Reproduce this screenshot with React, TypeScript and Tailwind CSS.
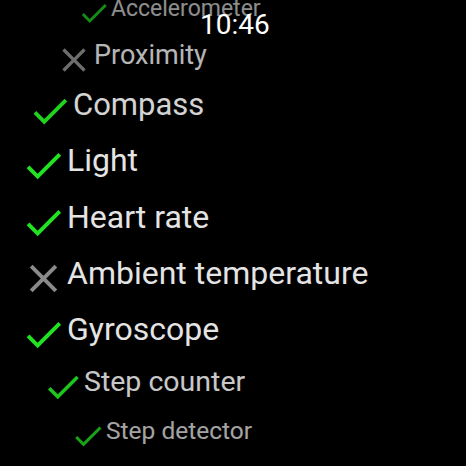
import React from "react";

const CHECK = "M9 16.17L4.83 12l-1.42 1.41L9 19 21 7l-1.41-1.41z";
const CLOSE =
  "M19 6.41L17.59 5 12 10.59 6.41 5 5 6.41 10.59 12 5 17.59 6.41 19 12 13.41 17.59 19 19 17.59 13.41 12z";

function Icon({ ok, cls }: { ok: boolean; cls: string }) {
  return (
    <svg viewBox="0 0 24 24" className={cls + " shrink-0"} fill={ok ? "#22e322" : "#8a8a8a"}>
      <path d={ok ? CHECK : CLOSE} />
    </svg>
  );
}

export default function App() {
  return (
    <div
      className="relative w-[466px] h-[466px] overflow-hidden bg-black"
      style={{ fontFamily: "Roboto, 'Noto Sans', sans-serif" }}
    >
      <div className="flex flex-col mt-[-4px]">
        <div className="flex h-[44px] pl-[77px] opacity-[0.62]">
          <Icon ok cls="w-[34px] h-[34px]" />
          <span className="mt-[1px] text-[23px] leading-none text-[#e4e4e4] whitespace-nowrap">Accelerometer</span>
        </div>
        <div className="flex h-[48px] pl-[54px] opacity-[0.8]">
          <Icon ok={false} cls="w-[40px] h-[40px]" />
          <span className="mt-[2px] text-[27px] leading-none text-[#e4e4e4] whitespace-nowrap">Proximity</span>
        </div>
        <div className="flex h-[54px] pl-[27px] opacity-[0.93]">
          <Icon ok cls="w-[46px] h-[46px]" />
          <span className="mt-[1px] text-[31px] leading-none text-[#e4e4e4] whitespace-nowrap">Compass</span>
        </div>
        <div className="flex h-[57px] pl-[20px]">
          <Icon ok cls="w-[47px] h-[47px]" />
          <span className="mt-[2px] text-[32px] leading-none text-[#e4e4e4] whitespace-nowrap">Light</span>
        </div>
        <div className="flex h-[56px] pl-[20px]">
          <Icon ok cls="w-[47px] h-[47px]" />
          <span className="mt-[2px] text-[32px] leading-none text-[#e4e4e4] whitespace-nowrap">Heart rate</span>
        </div>
        <div className="flex h-[56px] pl-[20px]">
          <Icon ok={false} cls="w-[47px] h-[47px]" />
          <span className="mt-[2px] text-[32px] leading-none text-[#e4e4e4] whitespace-nowrap">Ambient temperature</span>
        </div>
        <div className="flex h-[55px] pl-[20px]">
          <Icon ok cls="w-[47px] h-[47px]" />
          <span className="mt-[2px] text-[32px] leading-none text-[#e4e4e4] whitespace-nowrap">Gyroscope</span>
        </div>
        <div className="flex h-[52px] pl-[42px] opacity-[0.88]">
          <Icon ok cls="w-[42px] h-[42px]" />
          <span className="mt-[2px] text-[28.5px] leading-none text-[#e4e4e4] whitespace-nowrap">Step counter</span>
        </div>
        <div className="flex h-[48px] pl-[70px] opacity-[0.72]">
          <Icon ok cls="w-[36px] h-[36px]" />
          <span className="mt-[1px] text-[24.5px] leading-none text-[#e4e4e4] whitespace-nowrap">Step detector</span>
        </div>
      </div>
      <div className="absolute left-[200px] top-[11px] text-[28px] leading-none font-normal text-white">
        10:46
      </div>
    </div>
  );
}
